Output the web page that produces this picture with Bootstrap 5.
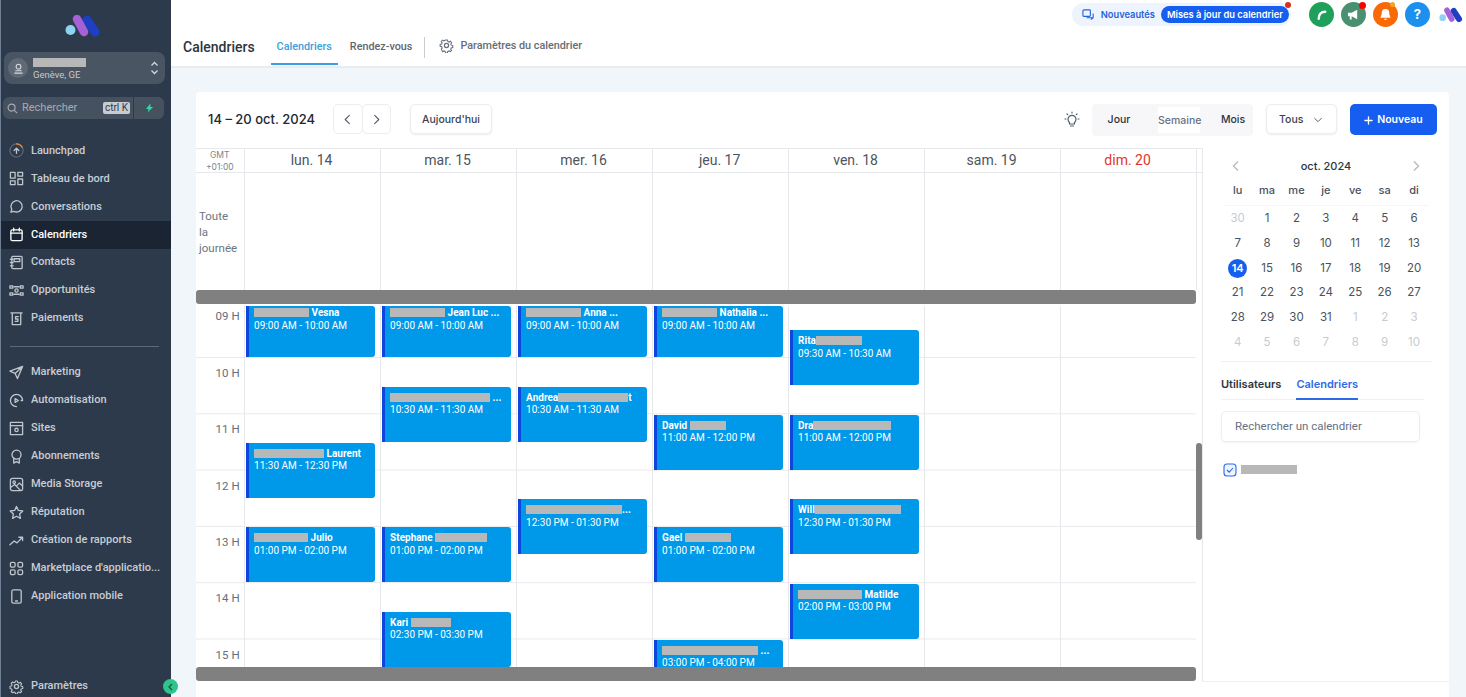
<!DOCTYPE html>
<html lang="fr">
<head>
<meta charset="utf-8">
<title>Calendriers</title>
<link href="https://cdn.jsdelivr.net/npm/bootstrap@5.3.0/dist/css/bootstrap.min.css" rel="stylesheet">
<style>
html,body{height:697px;overflow:hidden}
body{font-family:Inter,"Liberation Sans",sans-serif;background:#f1f6fa;color:#344054;font-size:12px}
.shell{height:697px}
.side{width:171px;flex:none;background:#2d3a4b;border-left:1px solid #6f7f94;color:#c8cdd4;font-family:Roboto,sans-serif;position:relative}
.side-logo{height:52px;padding:15px 6px 0 0}
.loc{margin:0 6px 0 3px;height:32px;background:#4a5563;border-radius:8px;padding:0 6px 0 4px;gap:5px}
.loc-av{width:20px;height:20px;border-radius:50%;background:#606a77}
.loc-l{font-size:9.5px;line-height:11px;color:#c4c8ce;padding-top:2px}
.loc-l .rd{margin-bottom:2px}
.srch{margin:13px 6px 0 2px;height:22px;gap:1px}
.srch-a{background:#465160;border-radius:6px 0 0 6px;width:130px;padding:0 3px 0 4px;color:#a5abb4;font-size:11px}
.srch-b{background:#465160;border-radius:0 6px 6px 0;width:30px}
.kbd-k{background:#c9cdd2;color:#2d3a4b;font-size:10px;line-height:12px;border-radius:2px;padding:0 2px;margin-left:auto}
.side-nav{margin-top:18px}
.side-i{height:27.95px;padding:0 0 0 8px;gap:7px;color:#c8cdd4;font-size:11px;font-weight:500;white-space:nowrap;text-decoration:none}
.side-i svg{width:15px;height:15px;flex:none;fill:none;stroke:#bfc5cd;stroke-width:1.4;stroke-linecap:round;stroke-linejoin:round}
.side-i.on{background:#1b2432;color:#fff}
.side-i.on svg{stroke:#fff}
.side-hr{height:1px;background:#5d6978;margin:13px 12px 12px 9px}
.side-end{position:absolute;left:0;right:0;bottom:-3px}
.coll{position:absolute;right:-7px;bottom:3px;width:15px;height:15px;border-radius:50%;background:#2dc58c;color:#1c5b46;z-index:5}
.main-col{min-width:0}
.top{height:68px;background:#fff;border-bottom:2px solid #e8ecf0;position:relative;padding-left:12px;flex:none}
.top-r{position:absolute;top:0;right:3px;height:29px;gap:7px}
.news{position:relative;height:23px;background:#eef4fd;border-radius:12px;padding:0 2px 0 10px;margin-right:11px;color:#2563d8;font-size:9.3px;font-weight:600;gap:6px}
.news-p{background:#155eef;color:#fff;border-radius:9px;height:17px;line-height:17px;padding:0 6px}
.news-d{position:absolute;right:0;top:-1px;width:6px;height:6px;border-radius:50%;background:#d92d20}
.circ{width:25px;height:25px;border-radius:50%;position:relative;flex:none}
.circ svg{width:13px;height:13px}
.circ-d{position:absolute;right:0;top:0;width:7px;height:7px;border-radius:50%;background:#f00}
.top-logo{margin-left:2px}
.top-tit{font-family:Roboto,sans-serif;font-size:14px;font-weight:500;color:#2b3440;margin-right:16px;padding-top:37px}
.ttab{font-family:Roboto,sans-serif;font-size:10.8px;font-weight:500;color:#5f6670;padding:10px 6px 0;height:36px;margin-top:29px;line-height:16px;text-decoration:none}
.ttab.on{color:#3ba0dc;border-bottom:2px solid #3ba0dc}
.ttab+.ttab{margin-left:6px}
.top-sep{width:1px;height:21px;background:#c8ccd1;margin:37px 14px 0 6px}
.ttab-g{font-family:Roboto,sans-serif;font-size:10.8px;font-weight:500;color:#666d76;margin-top:38px;height:20px;gap:6px}
.ttab-g svg{width:15px;height:15px;fill:none;stroke:#666d76;stroke-width:1.3}
.wrap{padding:24px 17px 0 25px;min-height:0}
.cal-card{background:#fff;border-radius:4px 4px 0 0;height:605px}
.bar{height:56px;padding:12px 12px 0 12px;flex:none}
.bar-date{font-size:13px;font-weight:500;color:#1d2733;margin-right:19px;line-height:30px;width:106px;white-space:nowrap}
.ghost{border:1px solid #ebedf0;background:#fff;border-radius:5px;height:30px;font-size:10.5px;font-weight:500;color:#3b4350;padding:1px 0 0;box-shadow:0 1px 2px rgba(16,24,40,.08)}
.pg{width:29.5px;box-shadow:none}
.pg+.pg{margin-left:-1px}
.pg svg,.bar svg{width:13px;height:13px;fill:none;stroke:#555e6a;stroke-width:1.2;stroke-linecap:round;stroke-linejoin:round}
.seg{background:#f7f7f9;border-radius:4px;height:32px;font-size:10.5px;font-weight:500;color:#2d3540;margin-right:13px}
.seg-i{line-height:32px;text-align:center}
.seg-i.mid{background:#fff;color:#667085;margin:3px 0;line-height:27px;white-space:nowrap}
.nv{background:#155eef;color:#fff;border:0;border-radius:5px;height:31px;width:87px;font-size:10.5px;font-weight:600;padding:1px 0 0;gap:4px}
.bar .nv svg{stroke:#fff;width:9px;height:9px;stroke-width:1.5}
.body-row{min-height:0}
.grid-col{width:1006px;flex:none;position:relative}
.hd{height:25px;border-top:1px solid #e6e8ec;border-bottom:1px solid #e6e8ec;display:flex}
.c-t{width:48.6px;flex:none;border-right:1px solid #e6e8ec}
.c-d{width:136px;flex:none;border-right:1px solid #e6e8ec}
.hd .c-d{font-family:Roboto,sans-serif;font-size:14px;color:#4c5561;text-align:center;line-height:23px;padding-right:1px}
.gmt{font-size:8.5px;line-height:11.5px;color:#7c848e;text-align:center;padding-top:1px}
.allday{height:117px;display:flex;flex:none;width:1000px}
.allday .c-t{font-size:11.5px;line-height:16px;color:#6d7580;padding:35px 0 0 3px;font-family:Roboto,sans-serif}
.sb-h{height:14px;width:1000px;background:#808080;border-radius:3px;flex:none}
.gap-w{height:2px;flex:none}
.tg{height:361px;overflow:hidden;display:flex;width:1000px;flex:none}
.tg .c-t,.tg .c-d{display:grid;grid-template-rows:24px repeat(14,28.15px);background-image:linear-gradient(#e9eaee 1px,transparent 1px);background-size:100% 56.3px;background-position:0 51px;align-content:start}
.hr{grid-row:span 2;text-align:right;padding:8px 4px 0 0;font-family:Roboto,sans-serif;font-size:11.5px;color:#666e79;line-height:14px}
.hr.first{padding-top:3px}
.ev{grid-row:var(--s)/span 2;background:#0098e9;border-left:3px solid #0f45dc;border-radius:0 3px 3px 0;margin:.4px 4.500px 1px 1.500px;color:#fff;font-family:Roboto,sans-serif;font-size:10px;line-height:12px;padding:5px 0 0 5px;white-space:nowrap;overflow:hidden;min-height:0}
.ev b{font-weight:700;display:block;height:12.500px}
.ev.cut{padding-top:1px;margin-top:0}
.rd{display:inline-block;height:9px;background:#b8b8b8;vertical-align:-1px}
.sb-v{position:absolute;right:0;top:295px;width:6px;height:97px;background:#808080;border-radius:3px}
.panel{width:247px;flex:none;border-left:1px solid #e6e8ec;border-bottom:1px solid #eef0f2;height:534px;padding:0 18px}
.mc-h{height:33px;padding:3px 9px 0;font-size:11px;font-weight:500;color:#2e3640}
.mc-h svg{width:12px;height:12px;fill:none;stroke:#b4b9c0;stroke-width:1.3}
.mc{display:grid;grid-template-columns:repeat(7,29.4px);font-size:11.5px;text-align:center;color:#49525e;width:206px;margin-left:2px}
.mc>div{height:24.8px;line-height:24.8px}
.mc .w{height:25px;line-height:14px;color:#49525e;font-weight:500;font-size:11px;border-bottom:1px solid #f6f6f7;padding-top:2px}
.mc .o{color:#c7cbd0}
.mc .t span{display:inline-block;width:19px;height:19px;line-height:19px;border-radius:50%;background:#155eef;color:#fff;font-weight:600;font-size:11px}
.mc-hr{height:1px;background:#eef0f2;margin:6px -1px 0 0;width:211px}
.ptabs{margin-top:14px;font-size:11px;font-weight:600;color:#2d3540;gap:15px;border-bottom:1px solid #f1f2f4;width:203px;height:24px}
.ptabs .on{color:#2e6ae6;border-bottom:2px solid #2e6ae6;height:24px}
.p-in{margin-top:11px;width:199px;height:31px;border:1px solid #eceef1;border-radius:5px;font-size:11.5px;font-family:Roboto,sans-serif;color:#667085;padding:0 13px;line-height:29px;box-shadow:0 1px 2px rgba(16,24,40,.05)}
.p-ck{margin:21px 0 0 2px;gap:4px}
.p-ck svg{width:14px;height:14px}
</style>
</head>
<body>
<div class="d-flex shell">
<aside class="side d-flex flex-column">
  <div class="side-logo d-flex justify-content-center">
    <svg width="36" height="22" viewBox="0 0 36 22"><circle cx="5.500" cy="15" r="5" fill="#8fd3f4"/><path d="M22 5l8 12" stroke="#1e3fc4" stroke-width="9" stroke-linecap="round"/><path d="M12 4l7 13" stroke="#a660d8" stroke-width="8.500" stroke-linecap="round"/></svg>
  </div>
  <div class="loc d-flex align-items-center">
    <span class="loc-av d-flex align-items-center justify-content-center"><svg width="11" height="11" viewBox="0 0 12 12" fill="none" stroke="#d8dbe0" stroke-width="1.2"><circle cx="6" cy="4" r="2.6"/><path d="M1.5 11h9M2.5 8.5h7"/></svg></span>
    <div class="flex-grow-1 loc-l"><span class="rd d-block" style="width:53px"></span>Genève, GE</div>
    <svg width="9" height="16" viewBox="0 0 9 16" fill="none" stroke="#d3d6da" stroke-width="1.3"><path d="M1.5 5.5L4.5 2.5l3 3M1.5 10.5l3 3 3-3"/></svg>
  </div>
  <div class="srch d-flex">
    <div class="srch-a d-flex align-items-center gap-1"><svg width="11" height="11" viewBox="0 0 12 12" fill="none" stroke="#a5abb4" stroke-width="1.3"><circle cx="5" cy="5" r="3.8"/><path d="M8 8l3 3"/></svg>Rechercher<span class="kbd-k">ctrl K</span></div>
    <div class="srch-b d-flex align-items-center justify-content-center"><svg width="9" height="10" viewBox="0 0 10 10"><path d="M6 0L1 6h3L3 10l6-6H6z" fill="#2fd6a3"/></svg></div>
  </div>
  <nav class="side-nav nav flex-column">
    <a class="side-i d-flex align-items-center"><svg viewBox="0 0 16 16"><circle cx="8" cy="8" r="7" stroke="#5a6675"/><path d="M8 1a7 7 0 0 1 6 3.5" stroke="#e08a3c"/><path d="M8 11V6M5.5 8L8 5.5 10.5 8"/></svg>Launchpad</a>
    <a class="side-i d-flex align-items-center"><svg viewBox="0 0 16 16"><rect x="1.5" y="1.5" width="5" height="6"/><rect x="9.5" y="1.5" width="5" height="4"/><rect x="1.5" y="10.5" width="5" height="4"/><rect x="9.5" y="8.5" width="5" height="6"/></svg>Tableau de bord</a>
    <a class="side-i d-flex align-items-center"><svg viewBox="0 0 16 16"><path d="M2 14l1-3a6 6 0 1 1 2.4 2.2z"/></svg>Conversations</a>
    <a class="side-i on d-flex align-items-center"><svg viewBox="0 0 16 16"><rect x="2" y="3" width="12" height="11.5" rx="1.5"/><path d="M2 6.5h12M5 1.2v3M11 1.2v3"/></svg>Calendriers</a>
    <a class="side-i d-flex align-items-center"><svg viewBox="0 0 16 16"><rect x="3" y="1.5" width="11" height="13" rx="1"/><rect x="5.5" y="4" width="6" height="3"/><path d="M1.5 4.5h3M1.5 8h3M1.5 11.5h3"/></svg>Contacts</a>
    <a class="side-i d-flex align-items-center"><svg viewBox="0 0 16 16"><circle cx="8" cy="8" r="1.7"/><path d="M1 3h3v2.5H1zM12 3h3v2.5h-3zM1 10.5h3V13H1zM12 10.5h3V13h-3zM5.5 4h5M5.5 12h5"/></svg>Opportunités</a>
    <a class="side-i d-flex align-items-center"><svg viewBox="0 0 16 16"><path d="M2 2h12M3.5 2v12.5h9V2"/><path d="M10 6H7v2.5h2.5V11H6.500"/></svg>Paiements</a>
    <div class="side-hr"></div>
    <a class="side-i d-flex align-items-center"><svg viewBox="0 0 16 16"><path d="M14.500 1.500L1 6.500l5.500 2.500 2.500 5.500zM6.500 9l8-7.500"/></svg>Marketing</a>
    <a class="side-i d-flex align-items-center"><svg viewBox="0 0 16 16"><path d="M14.500 8A6.500 6.500 0 1 0 8 14.500M14.500 8H13"/><path d="M6.500 6l3.500 2-3.500 2z"/></svg>Automatisation</a>
    <a class="side-i d-flex align-items-center"><svg viewBox="0 0 16 16"><rect x="1.500" y="1.500" width="13" height="13"/><path d="M1.500 5h13"/><circle cx="8" cy="9.500" r="1.800"/></svg>Sites</a>
    <a class="side-i d-flex align-items-center"><svg viewBox="0 0 16 16"><circle cx="8" cy="6" r="4.800"/><path d="M5 10v5l3-1.500 3 1.500v-5"/></svg>Abonnements</a>
    <a class="side-i d-flex align-items-center"><svg viewBox="0 0 16 16"><rect x="1.500" y="1.500" width="13" height="13" rx="2"/><circle cx="5.500" cy="5.500" r="1.300"/><path d="M2 11l4-3 6 6M8 9.500l3-3 3.500 3"/></svg>Media Storage</a>
    <a class="side-i d-flex align-items-center"><svg viewBox="0 0 16 16"><path d="M8 1.500l2 4.300 4.700.6-3.400 3.200.9 4.700L8 12l-4.200 2.300.9-4.700L1.300 6.400 6 5.800z"/></svg>Réputation</a>
    <a class="side-i d-flex align-items-center"><svg viewBox="0 0 16 16"><path d="M1 12.500l4.500-4 3 2 6-6M10.500 4.500h4v3.500"/></svg>Création de rapports</a>
    <a class="side-i d-flex align-items-center"><svg viewBox="0 0 16 16"><rect x="1.500" y="1.500" width="5" height="5" rx="1.500"/><rect x="9.500" y="1.500" width="5" height="5" rx="1.500"/><rect x="1.500" y="9.500" width="5" height="5" rx="1.500"/><rect x="9.500" y="9.500" width="5" height="5" rx="1.500"/></svg>Marketplace d'applicatio...</a>
    <a class="side-i d-flex align-items-center"><svg viewBox="0 0 16 16"><rect x="3" y="1" width="10" height="14" rx="1.500"/><path d="M7 12.800h2"/></svg>Application mobile</a>
  </nav>
  <div class="side-end">
    <a class="side-i d-flex align-items-center"><svg viewBox="0 0 16 16"><circle cx="8" cy="8" r="2.200"/><path d="M6.800 1.200h2.400l.4 2 1.500.7 1.800-1 1.600 1.800-1.100 1.700.5 1.500 2 .5v2.300l-2 .5-.6 1.500 1.100 1.700-1.700 1.600-1.700-1-1.500.6-.5 2H6.800l-.5-2-1.500-.6-1.700 1-1.700-1.600 1.100-1.700-.6-1.500-2-.5V7.900l2-.5.500-1.500-1.100-1.700 1.700-1.800 1.700 1 1.500-.7z" transform="translate(1.200 1.100) scale(.85)"/></svg>Paramètres</a>
  </div>
  <div class="coll d-flex align-items-center justify-content-center"><svg width="7" height="8" viewBox="0 0 7 8" fill="none" stroke="#1c5b46" stroke-width="1.400"><path d="M5 1L2 4l3 3"/></svg></div>
</aside>
<div class="main-col flex-grow-1 d-flex flex-column">
  <header class="top d-flex">
    <div class="top-tit">Calendriers</div>
    <a class="ttab on">Calendriers</a>
    <a class="ttab">Rendez-vous</a>
    <div class="top-sep"></div>
    <div class="ttab-g d-flex"><svg viewBox="0 0 16 16"><circle cx="8" cy="8" r="2.200"/><path d="M6.800 1h2.400l.4 2 1.500.7 1.800-1 1.500 1.800-1 1.600.5 1.500 2 .5v2.400l-2 .5-.6 1.500 1.100 1.600-1.600 1.700-1.700-1-1.500.6-.5 2H6.800l-.5-2-1.500-.6-1.700 1L1.500 12.600l1.100-1.600-.6-1.500-2-.5V6.600l2-.5.500-1.500-1-1.600 1.500-1.800 1.800 1 1.500-.7z" transform="translate(1.200 1.200) scale(.85)"/></svg>Paramètres du calendrier</div>
    <div class="top-r d-flex align-items-center">
      <div class="news d-flex align-items-center">
        <svg width="13" height="13" viewBox="0 0 14 14" fill="none" stroke="#2563d8" stroke-width="1.200"><rect x="1" y="2" width="8" height="7" rx="1"/><path d="M5 10.500h7V6M9.500 12.500l2.500-2"/></svg>
        Nouveautés<span class="news-p">Mises à jour du calendrier</span><span class="news-d"></span>
      </div>
      <span class="circ d-flex align-items-center justify-content-center" style="background:#1fa05a"><svg viewBox="0 0 14 14" fill="none" stroke="#fff" stroke-width="2.600" stroke-linecap="round"><path d="M4 11.500c0-4.500 2.500-7.500 7-7.500"/></svg></span>
      <span class="circ d-flex align-items-center justify-content-center" style="background:#48906f"><svg viewBox="0 0 14 14" fill="#fff"><path d="M1 5h4l6-3v10L5 9v3.500H3V9H1z"/></svg><span class="circ-d"></span></span>
      <span class="circ d-flex align-items-center justify-content-center" style="background:#f96a07"><svg viewBox="0 0 14 14" fill="#fff"><path d="M7 1a4 4 0 0 1 4 4c0 3 1.500 4.500 1.500 5.500h-11C1.500 9.500 3 8 3 5a4 4 0 0 1 4-4zM5.500 11.500h3A1.500 1.500 0 0 1 5.500 11.500z"/></svg><span class="circ-d" style="background:#f5a524;width:5px;height:5px;right:3px"></span></span>
      <span class="circ d-flex align-items-center justify-content-center fw-bold text-white" style="background:#1d8fee;font-size:13px">?</span>
      <svg class="top-logo" width="24" height="16" viewBox="0 0 36 22"><circle cx="5.500" cy="15" r="5" fill="#8fd3f4"/><path d="M22 5l8 12" stroke="#1e3fc4" stroke-width="9" stroke-linecap="round"/><path d="M12 4l7 13" stroke="#a660d8" stroke-width="8.500" stroke-linecap="round"/></svg>
    </div>
  </header>
  <div class="wrap flex-grow-1">
    <section class="cal-card d-flex flex-column">
      <div class="bar d-flex">
        <div class="bar-date">14 – 20 oct. 2024</div>
        <button class="ghost pg"><svg viewBox="0 0 14 14"><path d="M9 2.500L4.500 7 9 11.500"/></svg></button>
        <button class="ghost pg"><svg viewBox="0 0 14 14"><path d="M5 2.500L9.500 7 5 11.500"/></svg></button>
        <button class="ghost" style="width:82px;margin-left:19px">Aujourd'hui</button>
        <svg class="ms-auto" style="width:16px;height:16px;margin:7px 12px 0 0" viewBox="0 0 16 16"><path d="M5.500 11.500a4 4 0 1 1 5 0v1.500h-5zM6.500 15h3M8 1v1M1 8h1M14 8h1M3 3l.7.7M13 3l-.7.7"/></svg>
        <div class="seg d-flex">
          <div class="seg-i" style="width:66px;padding-right:12px">Jour</div>
          <div class="seg-i mid" style="width:42px">Semaine</div>
          <div class="seg-i" style="width:53px;padding-left:13px">Mois</div>
        </div>
        <button class="ghost d-flex align-items-center justify-content-between" style="width:71px;padding:1px 13px 0 12px;margin-right:13px">Tous<svg style="width:10px;height:10px" viewBox="0 0 12 12"><path d="M2 4l4 4 4-4"/></svg></button>
        <button class="nv d-flex align-items-center justify-content-center"><svg viewBox="0 0 10 10"><path d="M5 1v8M1 5h8"/></svg>Nouveau</button>
      </div>
      <div class="body-row d-flex flex-grow-1">
        <div class="grid-col d-flex flex-column">
          <div class="hd">
            <div class="c-t gmt">GMT<br>+01:00</div>
            <div class="c-d">lun. 14</div><div class="c-d">mar. 15</div><div class="c-d">mer. 16</div><div class="c-d">jeu. 17</div><div class="c-d">ven. 18</div><div class="c-d">sam. 19</div><div class="c-d" style="color:#e5342b">dim. 20</div>
          </div>
          <div class="allday">
            <div class="c-t">Toute<br>la<br>journée</div>
            <div class="c-d"></div><div class="c-d"></div><div class="c-d"></div><div class="c-d"></div><div class="c-d"></div><div class="c-d"></div><div class="c-d"></div>
          </div>
          <div class="sb-h"></div>
          <div class="gap-w"></div>
          <div class="tg">
            <div class="c-t">
              <div class="hr first">09 H</div><div class="hr">10 H</div><div class="hr">11 H</div><div class="hr">12 H</div><div class="hr">13 H</div><div class="hr">14 H</div><div class="hr">15 H</div>
            </div>
            <div class="c-d">
              <div class="ev cut" style="--s:1"><b><span class="rd" style="width:55px"></span> Vesna</b>09:00 AM - 10:00 AM</div>
              <div class="ev" style="--s:6"><b><span class="rd" style="width:70px"></span> Laurent</b>11:30 AM - 12:30 PM</div>
              <div class="ev" style="--s:9"><b><span class="rd" style="width:54px"></span> Julio</b>01:00 PM - 02:00 PM</div>
            </div>
            <div class="c-d">
              <div class="ev cut" style="--s:1"><b><span class="rd" style="width:55px"></span> Jean Luc ...</b>09:00 AM - 10:00 AM</div>
              <div class="ev" style="--s:4"><b><span class="rd" style="width:100px"></span> ...</b>10:30 AM - 11:30 AM</div>
              <div class="ev" style="--s:9"><b>Stephane <span class="rd" style="width:52px"></span></b>01:00 PM - 02:00 PM</div>
              <div class="ev" style="--s:12"><b>Kari <span class="rd" style="width:40px"></span></b>02:30 PM - 03:30 PM</div>
            </div>
            <div class="c-d">
              <div class="ev cut" style="--s:1"><b><span class="rd" style="width:55px"></span> Anna ...</b>09:00 AM - 10:00 AM</div>
              <div class="ev" style="--s:4"><b>Andrea<span class="rd" style="width:70px"></span>t</b>10:30 AM - 11:30 AM</div>
              <div class="ev" style="--s:8"><b><span class="rd" style="width:96px"></span>...</b>12:30 PM - 01:30 PM</div>
            </div>
            <div class="c-d">
              <div class="ev cut" style="--s:1"><b><span class="rd" style="width:55px"></span> Nathalia ...</b>09:00 AM - 10:00 AM</div>
              <div class="ev" style="--s:5"><b>David <span class="rd" style="width:36px"></span></b>11:00 AM - 12:00 PM</div>
              <div class="ev" style="--s:9"><b>Gael <span class="rd" style="width:46px"></span></b>01:00 PM - 02:00 PM</div>
              <div class="ev" style="--s:13"><b><span class="rd" style="width:96px"></span> ...</b>03:00 PM - 04:00 PM</div>
            </div>
            <div class="c-d">
              <div class="ev" style="--s:2"><b>Rita<span class="rd" style="width:46px"></span></b>09:30 AM - 10:30 AM</div>
              <div class="ev" style="--s:5"><b>Dra<span class="rd" style="width:78px"></span></b>11:00 AM - 12:00 PM</div>
              <div class="ev" style="--s:8"><b>Will<span class="rd" style="width:86px"></span></b>12:30 PM - 01:30 PM</div>
              <div class="ev" style="--s:11"><b><span class="rd" style="width:64px"></span> Matilde</b>02:00 PM - 03:00 PM</div>
            </div>
            <div class="c-d"></div>
            <div class="c-d"></div>
          </div>
          <div class="sb-h"></div>
          <div class="sb-v"></div>
        </div>
        <aside class="panel">
          <div class="mc-h d-flex align-items-center justify-content-between">
            <svg viewBox="0 0 12 12"><path d="M8 1.500L3.500 6 8 10.500"/></svg>oct. 2024<svg viewBox="0 0 12 12"><path d="M4 1.500L8.500 6 4 10.500"/></svg>
          </div>
          <div class="mc">
            <div class="w">lu</div><div class="w">ma</div><div class="w">me</div><div class="w">je</div><div class="w">ve</div><div class="w">sa</div><div class="w">di</div>
            <div class="o">30</div><div>1</div><div>2</div><div>3</div><div>4</div><div>5</div><div>6</div>
            <div>7</div><div>8</div><div>9</div><div>10</div><div>11</div><div>12</div><div>13</div>
            <div class="t"><span>14</span></div><div>15</div><div>16</div><div>17</div><div>18</div><div>19</div><div>20</div>
            <div>21</div><div>22</div><div>23</div><div>24</div><div>25</div><div>26</div><div>27</div>
            <div>28</div><div>29</div><div>30</div><div>31</div><div class="o">1</div><div class="o">2</div><div class="o">3</div>
            <div class="o">4</div><div class="o">5</div><div class="o">6</div><div class="o">7</div><div class="o">8</div><div class="o">9</div><div class="o">10</div>
          </div>
          <div class="mc-hr"></div>
          <div class="ptabs d-flex"><span>Utilisateurs</span><span class="on">Calendriers</span></div>
          <div class="p-in">Rechercher un calendrier</div>
          <div class="p-ck d-flex align-items-center">
            <svg viewBox="0 0 14 14" fill="#eef4fd" stroke="#2e6ae6" stroke-width="1.100"><rect x="1" y="1" width="12" height="12" rx="3"/><path d="M4 7l2.200 2.200L10 5" fill="none"/></svg>
            <span class="rd" style="width:56px"></span>
          </div>
        </aside>
      </div>
    </section>
  </div>
</div>
</div>
</body>
</html>
